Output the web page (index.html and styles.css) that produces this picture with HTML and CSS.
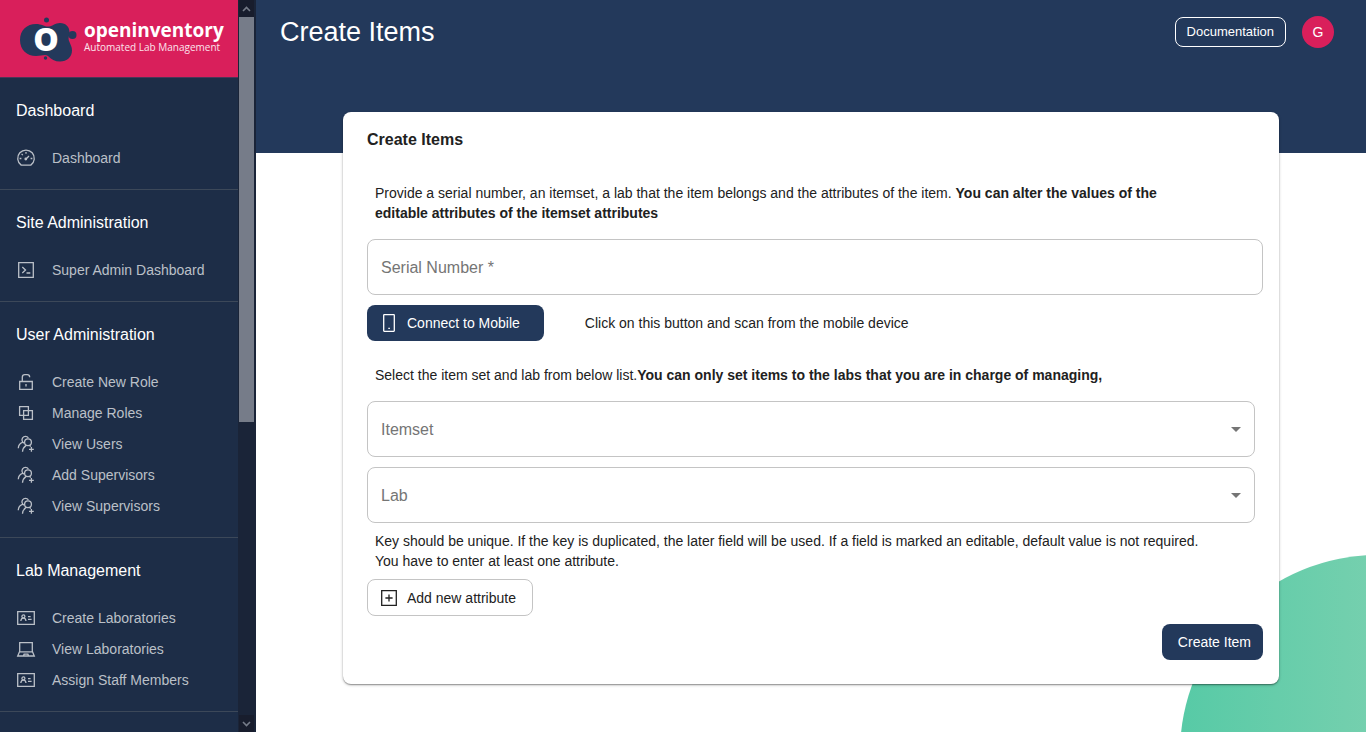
FILE: index.html
```html
<!DOCTYPE html>
<html lang="en">
<head>
<meta charset="utf-8">
<meta name="viewport" content="width=device-width, initial-scale=1">
<title>Create Items</title>
<link rel="stylesheet" href="styles.css">
</head>
<body>
<svg class="sprite" aria-hidden="true">
  <symbol id="i-gauge" viewBox="0 0 20 20">
    <path d="M5.2 17.1A8.3 8.3 0 1 1 14.8 17.1Z"/>
    <path d="M9.8 11.2 13 8M10 4v1.8M5.6 5.9l1.2 1.2M3.6 10.5h1.8M14.6 10.5h1.8"/>
    <circle class="dot" cx="9.8" cy="11" r="1.4"/>
  </symbol>
  <symbol id="i-console" viewBox="0 0 20 20">
    <path d="M2.7 2.7h14.6v14.6H2.7ZM6.3 7l3.2 3-3.2 3M10.5 13h3.8"/>
  </symbol>
  <symbol id="i-unlock" viewBox="0 0 20 20">
    <path d="M3.7 9.5h12.6v7.8H3.7ZM6.3 9.5V5.2Q6.3 2.7 8.8 2.7h2.4Q13.7 2.7 13.7 5.2M10 12v2.6"/>
  </symbol>
  <symbol id="i-overlap" viewBox="0 0 20 20">
    <path d="M3.6 3.6h8.8v8.8H3.6ZM7.6 7.6h8.8v8.8H7.6Z"/>
  </symbol>
  <symbol id="i-users" viewBox="0 0 20 20">
    <circle cx="12" cy="8.3" r="3.4"/>
    <path d="M6.5 17.8c.1-2.7 1.4-4.8 3.6-6.4M13.6 11.5l1.2 1.1M12.4 3.8C11 1.9 8 1.8 6.6 3.8 5.3 5.9 6.2 8.3 8 9.1M2.3 14.3c.1-3 1.6-5 4.2-5.9M15.4 12.9v4.8M13 15.3h4.8"/>
  </symbol>
  <symbol id="i-idcard" viewBox="0 0 20 20">
    <path d="M1.7 3.7h16.6v12.6H1.7Z"/>
    <circle cx="7.4" cy="8.4" r="1.5"/>
    <path d="M4.8 13c.2-1.8 1.2-2.8 2.6-2.8S9.8 11.2 10 13M12 8.6h2.6M12 11.4h3.6"/>
  </symbol>
  <symbol id="i-laptop" viewBox="0 0 20 20">
    <path d="M3.7 3.6h12.6v9.2H3.7ZM3.5 12.8 1.7 17h16.6l-1.8-4.2M7.5 16.8l.6-1.6h3.8l.6 1.6"/>
  </symbol>
  <symbol id="i-mobile" viewBox="0 0 20 20">
    <path d="M4.7 2.2Q4.7 1.7 5.2 1.7h9.6q.5 0 .5.5v15.6q0 .5-.5.5H5.2q-.5 0-.5-.5Z"/>
    <path d="M9.3 15.3h1.6"/>
  </symbol>
  <symbol id="i-plus" viewBox="0 0 20 20">
    <path d="M2.7 2.7h14.6v14.6H2.7ZM10 6.4v7.2M6.4 10h7.2"/>
  </symbol>
</svg>

<div class="app">
  <aside class="sidebar">
    <div class="sidebar-body">
      <a class="brand" href="#">
        <svg class="brand-mark" viewBox="0 0 58 44" aria-hidden="true">
          <g fill="#23395b">
            <path d="M0 23C0 13 7 7 16 7c6 0 9 3 13 2.500 4-.5 6-3.500 11-3.500 6 0 9.500 4 9.500 9 0 4-2 6 0 10 1 3 2.500 5 2.500 8.500 0 6.500-5 11-12 11-5 0-9-2-12-5.500-3-2-6 0-12 0C7 39 0 33 0 23Z"/>
            <circle cx="26.5" cy="3" r="2.5"/>
            <circle cx="52.5" cy="18" r="4"/>
            <circle cx="25.5" cy="41" r="1.7"/>
          </g>
          <text class="brand-letter" x="26" y="34" text-anchor="middle">o</text>
        </svg>
        <span class="brand-text">
          <span class="brand-name">openinventory</span>
          <span class="brand-tag">Automated Lab Management</span>
        </span>
      </a>
      <nav>
        <section class="group">
          <h2>Dashboard</h2>
          <a href="#"><svg class="icon"><use href="#i-gauge"/></svg>Dashboard</a>
        </section>
        <section class="group">
          <h2>Site Administration</h2>
          <a href="#"><svg class="icon"><use href="#i-console"/></svg>Super Admin Dashboard</a>
        </section>
        <section class="group">
          <h2>User Administration</h2>
          <a href="#"><svg class="icon"><use href="#i-unlock"/></svg>Create New Role</a>
          <a href="#"><svg class="icon"><use href="#i-overlap"/></svg>Manage Roles</a>
          <a href="#"><svg class="icon"><use href="#i-users"/></svg>View Users</a>
          <a href="#"><svg class="icon"><use href="#i-users"/></svg>Add Supervisors</a>
          <a href="#"><svg class="icon"><use href="#i-users"/></svg>View Supervisors</a>
        </section>
        <section class="group">
          <h2>Lab Management</h2>
          <a href="#"><svg class="icon"><use href="#i-idcard"/></svg>Create Laboratories</a>
          <a href="#"><svg class="icon"><use href="#i-laptop"/></svg>View Laboratories</a>
          <a href="#"><svg class="icon"><use href="#i-idcard"/></svg>Assign Staff Members</a>
        </section>
      </nav>
    </div>
    <div class="scrollbar" aria-hidden="true">
      <svg class="scroll-arrow" viewBox="0 0 15 17"><path d="M4 11 7.5 7.5 11 11"/></svg>
      <div class="scroll-track"><div class="scroll-thumb"></div></div>
      <svg class="scroll-arrow" viewBox="0 0 15 17"><path d="M4 7 7.5 10.5 11 7"/></svg>
    </div>
  </aside>

  <main class="main">
    <div class="blob"></div>
    <header class="hero">
      <h1>Create Items</h1>
      <button class="docs" type="button">Documentation</button>
      <button class="avatar" type="button" aria-label="Account">G</button>
    </header>
    <form class="card">
      <h2 class="card-title">Create Items</h2>
      <p class="note">Provide a serial number, an itemset, a lab that the item belongs and the attributes of the item. <strong>You can alter the values of the editable attributes of the itemset attributes</strong></p>
      <input class="field serial" type="text" placeholder="Serial Number *" aria-label="Serial Number" required>
      <div class="connect-row">
        <button class="btn primary connect" type="button"><svg class="icon"><use href="#i-mobile"/></svg>Connect to Mobile</button>
        <span>Click on this button and scan from the mobile device</span>
      </div>
      <p class="note">Select the item set and lab from below list.<strong>You can only set items to the labs that you are in charge of managing,</strong></p>
      <div class="selects">
        <div class="select-wrap">
          <select class="field" aria-label="Itemset"><option>Itemset</option></select>
          <svg class="caret" viewBox="0 0 10 5"><path d="M0 0h10L5 5Z"/></svg>
        </div>
        <div class="select-wrap">
          <select class="field" aria-label="Lab"><option>Lab</option></select>
          <svg class="caret" viewBox="0 0 10 5"><path d="M0 0h10L5 5Z"/></svg>
        </div>
      </div>
      <p class="note">Key should be unique. If the key is duplicated, the later field will be used. If a field is marked an editable, default value is not required. You have to enter at least one attribute.</p>
      <button class="btn outline" type="button"><svg class="icon"><use href="#i-plus"/></svg>Add new attribute</button>
      <button class="btn primary submit" type="submit">Create Item</button>
    </form>
  </main>
</div>
</body>
</html>
```
FILE: styles.css
```css
* { box-sizing: border-box; }
body {
  margin: 0;
  font-family: "Liberation Sans", Arial, sans-serif;
  font-size: 14px;
  line-height: 20px;
  color: #212121;
  background: #fff;
}
h1, h2, p { margin: 0; }
a { color: inherit; text-decoration: none; }
button, input, select { font: inherit; color: inherit; margin: 0; }
.sprite { position: absolute; width: 0; height: 0; }
.icon {
  width: 20px;
  height: 20px;
  flex: none;
  fill: none;
  stroke: currentColor;
  stroke-width: 1.3;
}
.dot { fill: currentColor; stroke: none; }

.app { display: flex; height: 100vh; }

.sidebar {
  display: flex;
  flex: none;
  width: 256px;
  background: #1d2d47;
}
.sidebar-body { flex: 1; overflow: hidden; color: #fff; }
.brand {
  display: flex;
  align-items: center;
  gap: 6px;
  height: 78px;
  padding-left: 20px;
  background: #d91f5b;
  border-bottom: 1px solid #4b3557;
  font-family: "Open Sans", sans-serif;
}
.brand-mark { width: 58px; height: 44px; flex: none; overflow: visible; }
.brand-letter { fill: #fff; font-family: "Open Sans", sans-serif; font-size: 42px; font-weight: 700; }
.brand-text { display: flex; flex-direction: column; padding-bottom: 4px; }
.brand-name { font-size: 19px; font-weight: 700; line-height: 20px; }
.brand-tag { font-size: 10px; line-height: 14px; color: #fbe4ec; }

.group { padding: 21px 0 16px; border-bottom: 1px solid #3c4859; }
.group h2 {
  padding-left: 16px;
  margin-bottom: 19px;
  font-size: 16px;
  font-weight: 400;
  line-height: 24px;
}
.group a {
  display: flex;
  align-items: center;
  gap: 16px;
  height: 31px;
  padding-left: 16px;
  color: #bbc0c8;
}

.scrollbar {
  display: flex;
  flex-direction: column;
  width: 18px;
  padding: 0 2px 0 1px;
  background: #1a2438;
}
.scroll-arrow {
  width: 15px;
  height: 17px;
  flex: none;
  fill: none;
  stroke: #767c89;
  stroke-width: 1.6;
  background: #181d2d;
}
.scroll-track { flex: 1; }
.scroll-thumb { height: 58%; background: #767c89; }

.main { position: relative; flex: 1; min-width: 0; overflow: hidden; }
.blob {
  position: absolute;
  right: -210px;
  bottom: -219px;
  width: 396px;
  height: 396px;
  border-radius: 50%;
  background: linear-gradient(90deg, #57caa6, #96d6b7);
}
.hero {
  display: flex;
  align-items: flex-start;
  height: 153px;
  padding: 16px 32px 0 24px;
  background: #23395b;
  color: #fff;
}
.hero h1 { flex: 1; font-size: 27px; font-weight: 400; line-height: 32px; }
.docs {
  height: 30px;
  padding: 0 11px;
  margin: 1px 16px 0 0;
  border: 1px solid #fff;
  border-radius: 8px;
  background: transparent;
  font-size: 13px;
  line-height: 16px;
}
.avatar {
  width: 32px;
  height: 32px;
  padding: 0;
  border: 0;
  border-radius: 50%;
  background: #d91f5b;
}

.card {
  position: relative;
  display: flex;
  flex-direction: column;
  align-items: flex-start;
  max-width: 936px;
  margin: -41px auto 0;
  padding: 16px 16px 24px 24px;
  border-radius: 8px;
  background: #fff;
  box-shadow: 0 1px 3px rgba(0, 0, 0, .3), 0 1px 1px rgba(0, 0, 0, .25);
}
.card-title { margin-bottom: 31px; font-size: 16px; line-height: 24px; }
.note { padding: 0 56px 0 8px; }
.field {
  width: 100%;
  height: 56px;
  padding: 2px 13px 0;
  border: 1px solid #c4c4c4;
  border-radius: 8px;
  background: #fff;
  color: #757575;
  font-size: 16px;
  appearance: none;
}
.field::placeholder { color: #757575; opacity: 1; }
.serial { margin: 16px 0 10px; }
.connect-row { display: flex; align-items: center; gap: 41px; margin-bottom: 24px; }
.btn {
  display: flex;
  align-items: center;
  gap: 8px;
  height: 36px;
  border: 0;
  border-radius: 8px;
}
.primary { background: #23395b; color: #fff; }
.connect { padding: 0 24px 0 12px; }
.selects {
  display: grid;
  gap: 10px;
  align-self: stretch;
  margin: 16px 8px 8px 0;
}
.select-wrap { display: grid; align-items: center; }
.select-wrap > * { grid-area: 1 / 1; }
.caret {
  width: 10px;
  height: 5px;
  margin-right: 14px;
  justify-self: end;
  fill: #757575;
  pointer-events: none;
}
.outline {
  height: 37px;
  margin: 8px 0;
  padding: 0 16px 0 11px;
  border: 1px solid #c4c4c4;
  background: #fff;
}
.submit { align-self: flex-end; padding: 0 12px 0 16px; }
```
